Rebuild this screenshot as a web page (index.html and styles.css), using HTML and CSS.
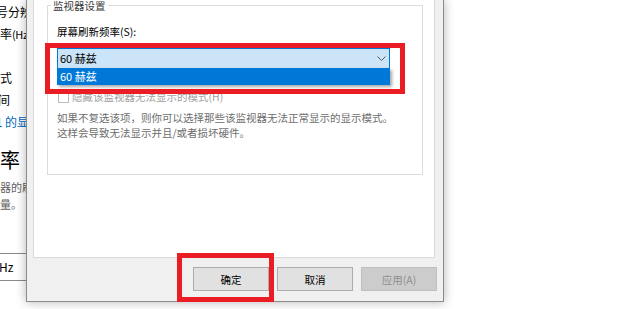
FILE: index.html
```html
<!DOCTYPE html>
<html lang="zh-CN">
<head>
<meta charset="utf-8">
<title>监视器设置</title>
<link rel="stylesheet" href="styles.css">
</head>
<body>
<div class="page">
  <div class="pl l1">活动信号分辨率</div>
  <div class="pl l2">刷新率<span class="tight">(Hz)</span></div>
  <div class="pl l3">颜色格式</div>
  <div class="pl l4">颜色空间</div>
  <div class="pl link">显示器 1 的显示适配器属性</div>
  <div class="pl heading">刷新率</div>
  <div class="pl small s1">选择显示器的刷新率</div>
  <div class="pl small s2">更多电量。</div>
  <div class="pbox"><span class="pbox-text">60 Hz</span></div>
</div>
<div class="dialog">
  <div class="panel">
    <fieldset class="group">
      <legend>监视器设置</legend>
      <div class="label">屏幕刷新频率(S):</div>
      <div class="combo">
        <span class="combo-text">60 赫兹</span>
        <svg class="chevron" width="9" height="5" viewBox="0 0 9 5"><polyline points="0.5,0.5 4.5,4.5 8.5,0.5" fill="none" stroke="#5a5a5a" stroke-width="1"/></svg>
        <div class="dropdown">60 赫兹</div>
      </div>
      <div class="check-row"><span class="checkbox"></span><span>隐藏该监视器无法显示的模式(H)</span></div>
      <p class="desc">如果不复选该项，则你可以选择那些该监视器无法正常显示的显示模式。<br>这样会导致无法显示并且/或者损坏硬件。</p>
    </fieldset>
  </div>
  <div class="buttons">
    <button class="btn">确定</button>
    <button class="btn">取消</button>
    <button class="btn disabled">应用(A)</button>
  </div>
</div>
<div class="mark mark-combo"></div>
<div class="mark mark-ok"></div>
</body>
</html>
```
FILE: styles.css
```css
* { box-sizing: border-box; }
html, body { margin: 0; padding: 0; }
body {
  width: 620px;
  height: 309px;
  overflow: hidden;
  background: #fff;
  display: flex;
  align-items: flex-start;
  font-family: "Noto Sans CJK SC", "Noto Sans", sans-serif;
  position: relative;
}
.page {
  width: 26px;
  flex: none;
  overflow: hidden;
  padding-top: 1px;
  color: #000;
  font-size: 12px;
}
.pl { white-space: nowrap; line-height: 22px; }
.l1 { margin-left: -40px; }
.l2 { margin-left: -24px; }
.tight { font-size: 11px; letter-spacing: -0.4px; }
.l3 { margin-left: -36px; margin-top: 22px; }
.l4 { margin-left: -38px; }
.link { color: #0067c0; margin-left: -43px; }
.heading { font-size: 20px; line-height: 28px; margin-top: 13px; margin-left: -40px; }
.small { font-size: 11px; line-height: 17px; color: #5f5f5f; }
.s1 { margin-top: 5px; margin-left: -44px; }
.s2 { margin-left: -33px; }
.pbox {
  margin-top: 40px;
  height: 28px;
  border-top: 1px solid #8a8a8a;
  border-bottom: 1px solid #8a8a8a;
  white-space: nowrap;
  line-height: 26px;
}
.pbox-text { display: inline-block; margin-left: -17px; }

.dialog {
  position: relative;
  z-index: 1;
  width: 418px;
  flex: none;
  background: #f0f0f0;
  border: 1px solid #8c8c8c;
  border-top: none;
  box-shadow: 0 0 10px rgba(0, 0, 0, 0.3);
  padding: 0 8px 0 6px;
  font-size: 10.5px;
}
.panel {
  height: 259px;
  background: #fff;
  border: 1px solid #d9d9d9;
  border-top: none;
}
.group {
  margin: -1px 0 0 13px;
  width: 376px;
  border: 1px solid #dcdcdc;
  padding: 0 9px 34px 9px;
  min-inline-size: auto;
}
.group legend {
  margin-left: -6px;
  padding: 0 2px;
  line-height: 13px;
  color: #3c3c3c;
}
.label { margin-top: 13px; line-height: 14px; color: #000; }
.combo {
  position: relative;
  margin-top: 9px;
  width: 333px;
  height: 21px;
  background: #cce4f7;
  border: 1px solid #0078d7;
  display: flex;
  align-items: center;
  padding: 0 3px 0 2px;
  color: #000;
}
.combo-text { line-height: 19px; font-size: 11px; }
.chevron { margin-left: auto; }
.dropdown {
  position: absolute;
  top: 100%;
  left: -1px;
  width: 333px;
  height: 17px;
  background: #0078d7;
  color: #fff;
  line-height: 17px;
  padding-left: 3px;
  font-size: 11px;
  box-shadow: 2px 2px 3px rgba(0, 0, 0, 0.35);
}
.check-row {
  margin-top: 21px;
  display: flex;
  align-items: center;
  gap: 3px;
  line-height: 14px;
  color: #a0a0a0;
}
.checkbox {
  width: 11px;
  height: 11px;
  margin-left: 1px;
  border: 1px solid #bcbcbc;
  background: #fff;
}
.desc { margin: 6px 0 0; line-height: 15px; color: #6d6d6d; }

.buttons {
  display: flex;
  justify-content: flex-end;
  gap: 8px;
  margin-top: 9px;
  margin-right: -2px;
  padding-bottom: 10px;
}
.btn {
  width: 76px;
  height: 24px;
  padding: 0;
  background: #e1e1e1;
  border: 1px solid #adadad;
  font: inherit;
  color: #000;
}
.btn.disabled { background: #cccccc; border-color: #bfbfbf; color: #8f8f8f; }

.mark { position: absolute; border: 5px solid #ea1c24; z-index: 2; }
.mark-combo { left: 45px; top: 43px; width: 360px; height: 51px; }
.mark-ok { left: 177px; top: 253px; width: 97px; height: 49px; }
```
